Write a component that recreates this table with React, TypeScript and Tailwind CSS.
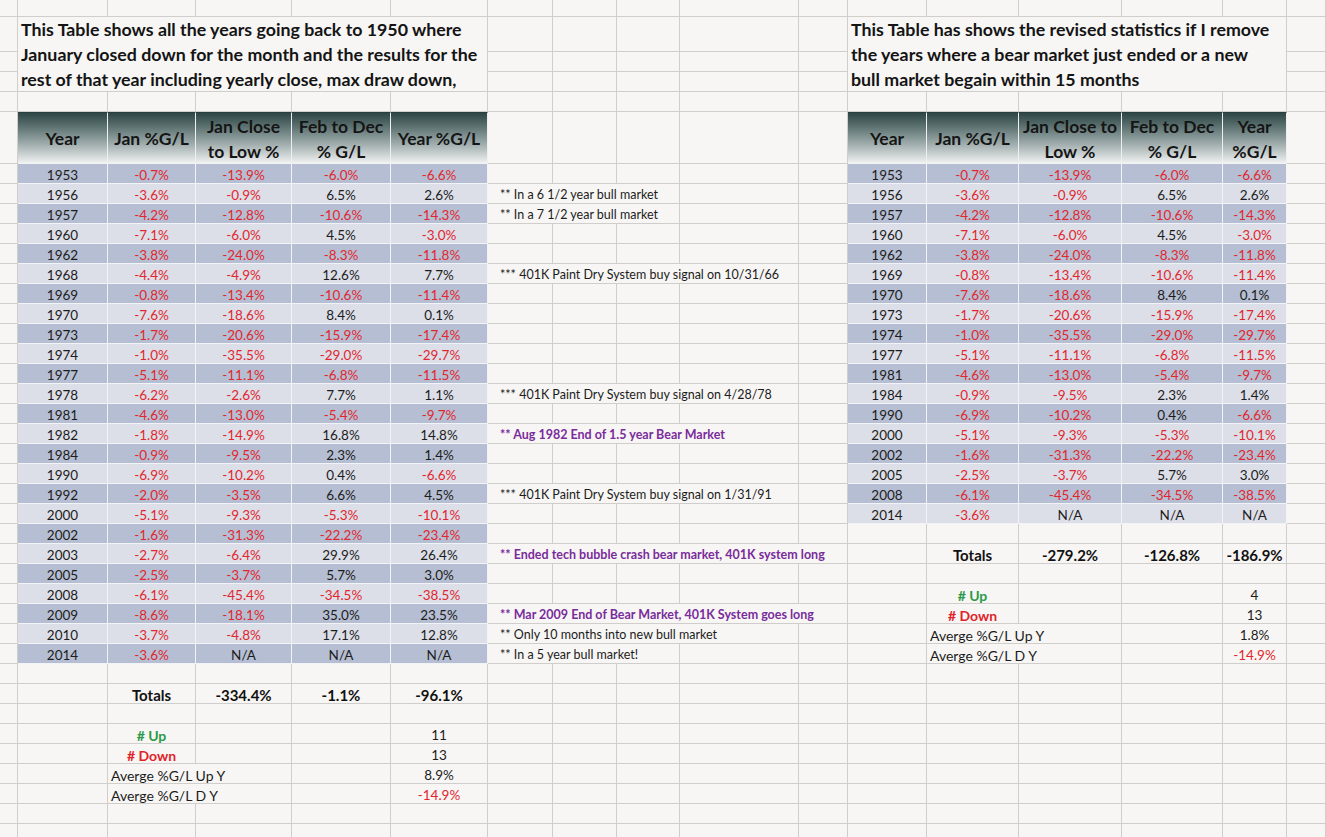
import React from 'react';

type Cell = { span?: number; rowSpan?: boolean; cls?: string; c?: React.ReactNode };

const G = 'border-r border-b border-[#cfcecb]';
const TB = 'border-r border-b border-[#f2f3f6]';
const DARK = 'bg-[#b5bed2]';
const LIGHT = 'bg-[#dcdfe8]';
const RED = 'text-[#e2262d]';
const TXT = 'text-[#1c1c1c]';
const PURPLE = 'text-[#7a2c9c]';

const spanCls: Record<number, string> = { 1: '', 2: 'col-span-2', 3: 'col-span-3', 4: 'col-span-4', 5: 'col-span-5' };

const blank = (): Cell => ({ cls: G });
const blanks = (n: number): Cell[] => Array.from({ length: n }, () => blank());

type Row = { y: string; v: string[]; note?: string; span?: number; purple?: boolean };

const leftData: Row[] = [
  { y: '1953', v: ['-0.7%', '-13.9%', '-6.0%', '-6.6%'] },
  { y: '1956', v: ['-3.6%', '-0.9%', '6.5%', '2.6%'], note: '** In a 6 1/2 year bull market', span: 3 },
  { y: '1957', v: ['-4.2%', '-12.8%', '-10.6%', '-14.3%'], note: '** In a 7 1/2 year bull market', span: 3 },
  { y: '1960', v: ['-7.1%', '-6.0%', '4.5%', '-3.0%'] },
  { y: '1962', v: ['-3.8%', '-24.0%', '-8.3%', '-11.8%'] },
  { y: '1968', v: ['-4.4%', '-4.9%', '12.6%', '7.7%'], note: '*** 401K Paint Dry System buy signal on 10/31/66', span: 4 },
  { y: '1969', v: ['-0.8%', '-13.4%', '-10.6%', '-11.4%'] },
  { y: '1970', v: ['-7.6%', '-18.6%', '8.4%', '0.1%'] },
  { y: '1973', v: ['-1.7%', '-20.6%', '-15.9%', '-17.4%'] },
  { y: '1974', v: ['-1.0%', '-35.5%', '-29.0%', '-29.7%'] },
  { y: '1977', v: ['-5.1%', '-11.1%', '-6.8%', '-11.5%'] },
  { y: '1978', v: ['-6.2%', '-2.6%', '7.7%', '1.1%'], note: '*** 401K Paint Dry System buy signal on 4/28/78', span: 4 },
  { y: '1981', v: ['-4.6%', '-13.0%', '-5.4%', '-9.7%'] },
  { y: '1982', v: ['-1.8%', '-14.9%', '16.8%', '14.8%'], note: '** Aug 1982 End of 1.5 year Bear Market', span: 4, purple: true },
  { y: '1984', v: ['-0.9%', '-9.5%', '2.3%', '1.4%'] },
  { y: '1990', v: ['-6.9%', '-10.2%', '0.4%', '-6.6%'] },
  { y: '1992', v: ['-2.0%', '-3.5%', '6.6%', '4.5%'], note: '*** 401K Paint Dry System buy signal on 1/31/91', span: 4 },
  { y: '2000', v: ['-5.1%', '-9.3%', '-5.3%', '-10.1%'] },
  { y: '2002', v: ['-1.6%', '-31.3%', '-22.2%', '-23.4%'] },
  { y: '2003', v: ['-2.7%', '-6.4%', '29.9%', '26.4%'], note: '** Ended tech bubble crash bear market, 401K system long', span: 5, purple: true },
  { y: '2005', v: ['-2.5%', '-3.7%', '5.7%', '3.0%'] },
  { y: '2008', v: ['-6.1%', '-45.4%', '-34.5%', '-38.5%'] },
  { y: '2009', v: ['-8.6%', '-18.1%', '35.0%', '23.5%'], note: '** Mar 2009 End of Bear Market, 401K System goes long', span: 5, purple: true },
  { y: '2010', v: ['-3.7%', '-4.8%', '17.1%', '12.8%'], note: '** Only 10 months into new bull market', span: 4 },
  { y: '2014', v: ['-3.6%', 'N/A', 'N/A', 'N/A'], note: '** In a 5 year bull market!', span: 3 },
];

const rightData: Row[] = [
  { y: '1953', v: ['-0.7%', '-13.9%', '-6.0%', '-6.6%'] },
  { y: '1956', v: ['-3.6%', '-0.9%', '6.5%', '2.6%'] },
  { y: '1957', v: ['-4.2%', '-12.8%', '-10.6%', '-14.3%'] },
  { y: '1960', v: ['-7.1%', '-6.0%', '4.5%', '-3.0%'] },
  { y: '1962', v: ['-3.8%', '-24.0%', '-8.3%', '-11.8%'] },
  { y: '1969', v: ['-0.8%', '-13.4%', '-10.6%', '-11.4%'] },
  { y: '1970', v: ['-7.6%', '-18.6%', '8.4%', '0.1%'] },
  { y: '1973', v: ['-1.7%', '-20.6%', '-15.9%', '-17.4%'] },
  { y: '1974', v: ['-1.0%', '-35.5%', '-29.0%', '-29.7%'] },
  { y: '1977', v: ['-5.1%', '-11.1%', '-6.8%', '-11.5%'] },
  { y: '1981', v: ['-4.6%', '-13.0%', '-5.4%', '-9.7%'] },
  { y: '1984', v: ['-0.9%', '-9.5%', '2.3%', '1.4%'] },
  { y: '1990', v: ['-6.9%', '-10.2%', '0.4%', '-6.6%'] },
  { y: '2000', v: ['-5.1%', '-9.3%', '-5.3%', '-10.1%'] },
  { y: '2002', v: ['-1.6%', '-31.3%', '-22.2%', '-23.4%'] },
  { y: '2005', v: ['-2.5%', '-3.7%', '5.7%', '3.0%'] },
  { y: '2008', v: ['-6.1%', '-45.4%', '-34.5%', '-38.5%'] },
  { y: '2014', v: ['-3.6%', 'N/A', 'N/A', 'N/A'] },
];

const DCELL = 'flex items-center justify-center pt-[3px] text-[13.5px] whitespace-nowrap';

function dataCells(r: Row, i: number): Cell[] {
  const bg = i % 2 === 0 ? DARK : LIGHT;
  const out: Cell[] = [{ cls: `${bg} ${TB} ${DCELL} ${TXT}`, c: r.y }];
  r.v.forEach((v) => {
    out.push({ cls: `${bg} ${TB} ${DCELL} ${v.startsWith('-') ? RED : TXT}`, c: v });
  });
  return out;
}

const HCELL =
  'bg-linear-to-b from-[#2d4746] via-[#8a9a9a] to-[#f5f5f5] border-r border-[#eef0f0] border-t border-t-[#283f3e] flex items-center justify-center text-center text-[17.5px] font-bold leading-[25px] text-[#151515] whitespace-nowrap';

const headersL: React.ReactNode[] = [
  'Year',
  'Jan %G/L',
  <>Jan Close<br />to Low %</>,
  <>Feb to Dec<br />% G/L</>,
  'Year %G/L',
];
const headersR: React.ReactNode[] = [
  'Year',
  'Jan %G/L',
  <>Jan Close to<br />Low %</>,
  <>Feb to Dec<br />% G/L</>,
  <>Year<br />%G/L</>,
];

const CT = `${G} flex items-center justify-center pt-[3px] whitespace-nowrap text-[13.5px] ${TXT}`;
const BOLD = `${G} flex items-center justify-center pt-[3px] whitespace-nowrap text-[15px] font-bold text-[#111]`;
const LEFTTXT = `${G} flex items-center justify-start pt-[3px] pl-[3px] whitespace-nowrap text-[14px] ${TXT}`;

function summary(kind: string, totals: string[], up: string, down: string, avgUp: string, avgD: string): Cell[] {
  switch (kind) {
    case 'totals':
      return [blank(), { cls: BOLD, c: 'Totals' }, ...totals.map((t) => ({ cls: BOLD, c: t }))];
    case 'up':
      return [blank(), { cls: `${G} flex items-center justify-center pt-[3px] text-[14px] font-bold text-[#2b9a48]`, c: '# Up' }, blank(), blank(), { cls: CT, c: up }];
    case 'down':
      return [blank(), { cls: `${G} flex items-center justify-center pt-[3px] text-[14px] font-bold text-[#e0232a]`, c: '# Down' }, blank(), blank(), { cls: CT, c: down }];
    case 'avgUp':
      return [blank(), { span: 2, cls: LEFTTXT, c: 'Averge %G/L Up Y' }, blank(), { cls: CT, c: avgUp }];
    case 'avgD':
      return [blank(), { span: 2, cls: LEFTTXT, c: 'Averge %G/L D Y' }, blank(), { cls: `${CT} ${RED}`, c: avgD }];
    default:
      return blanks(5);
  }
}

function buildRows(): Cell[][] {
  const rows: Cell[][] = [];
  rows.push(blanks(17));
  const TITLE = `${G} px-[3px] text-[17.8px] font-bold leading-[25px] text-[#141414] whitespace-nowrap`;
  rows.push([
    blank(),
    {
      span: 5,
      rowSpan: true,
      cls: TITLE,
      c: (
        <>
          This Table shows all the years going back to 1950 where
          <br />
          January closed down for the month and the results for the
          <br />
          rest of that year including yearly close, max draw down,
        </>
      ),
    },
    ...blanks(5),
    {
      span: 5,
      rowSpan: true,
      cls: TITLE,
      c: (
        <>
          This Table has shows the revised statistics if I remove
          <br />
          the years where a bear market just ended or a new
          <br />
          bull market begain within 15 months
        </>
      ),
    },
    blank(),
  ]);
  rows.push([blank(), ...blanks(5), blank()]);
  rows.push([blank(), ...blanks(5), blank()]);
  rows.push(blanks(17));
  rows.push([
    blank(),
    ...headersL.map((h) => ({ cls: HCELL, c: h })),
    ...blanks(5),
    ...headersR.map((h) => ({ cls: HCELL, c: h })),
    blank(),
  ]);

  const leftKinds: Record<number, string> = { 26: 'totals', 28: 'up', 29: 'down', 30: 'avgUp', 31: 'avgD' };
  const rightKinds: Record<number, string> = { 19: 'totals', 21: 'up', 22: 'down', 23: 'avgUp', 24: 'avgD' };

  for (let i = 0; i < 34; i++) {
    const row: Cell[] = [blank()];
    if (i < leftData.length) row.push(...dataCells(leftData[i], i));
    else row.push(...summary(leftKinds[i] || '', ['-334.4%', '-1.1%', '-96.1%'], '11', '13', '8.9%', '-14.9%'));
    const ld = i < leftData.length ? leftData[i] : undefined;
    if (ld && ld.note) {
      const sp = ld.span || 3;
      row.push({
        span: sp,
        cls: `${G} flex items-center pt-[3px] pl-[12px] whitespace-nowrap text-[12.5px] ${ld.purple ? `${PURPLE} font-bold` : TXT}`,
        c: ld.note,
      });
      row.push(...blanks(5 - sp));
    } else row.push(...blanks(5));
    if (i < rightData.length) row.push(...dataCells(rightData[i], i));
    else row.push(...summary(rightKinds[i] || '', ['-279.2%', '-126.8%', '-186.9%'], '4', '13', '1.8%', '-14.9%'));
    row.push(blank());
    rows.push(row);
  }
  return rows;
}

export default function App() {
  const rows = buildRows();
  return (
    <div className="w-[1326px] h-[837px] overflow-hidden bg-[#f7f6f4] font-['Lato',sans-serif]">
      <div className="grid grid-cols-[18px_90px_88px_96px_99px_97px_65px_64px_63px_119px_49px_79px_92px_103px_101px_64px_39px] grid-rows-[17px_35px_20px_20px_20px_52px] auto-rows-[20px]">
        {rows.flatMap((row, ri) =>
          row.map((cell, ci) => (
            <div
              key={`${ri}-${ci}`}
              className={`${spanCls[cell.span || 1]} ${cell.rowSpan ? 'row-span-3' : ''} ${cell.cls || ''} overflow-visible`}
            >
              {cell.c}
            </div>
          ))
        )}
      </div>
    </div>
  );
}
